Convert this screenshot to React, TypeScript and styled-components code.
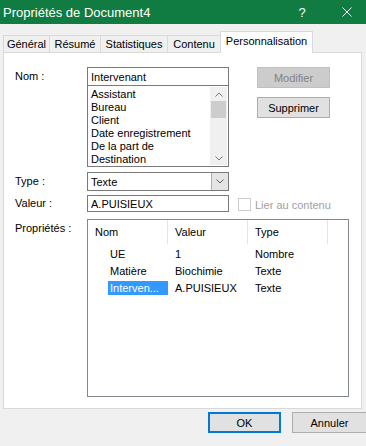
import React from "react";
import styled, { createGlobalStyle, css } from "styled-components";

const Global = createGlobalStyle`
  html, body { margin: 0; padding: 0; background: #f0f0f0; }
  body { font-family: "Liberation Sans", Arial, sans-serif; font-size: 11px; color: #000; }
  * { box-sizing: border-box; }
`;

const Window = styled.div`
  width: 366px;
  height: 446px;
  background: #f0f0f0;
  display: flex;
  flex-direction: column;
  overflow: hidden;
`;

const TitleBar = styled.div`
  height: 24px;
  background: #107c41;
  color: #fff;
  display: flex;
  align-items: center;
  padding-left: 3px;
  font-size: 13px;
`;

const TitleText = styled.span`
  flex: 1;
`;

const TitleBtn = styled.span<{ $w: number }>`
  width: ${(p) => p.$w}px;
  display: flex;
  justify-content: center;
  align-items: center;
  font-size: 13px;
`;

const TabStrip = styled.div`
  display: flex;
  align-items: flex-end;
  margin-top: 7px;
  padding-left: 3px;
  height: 21px;
`;

const Tab = styled.div<{ $active?: boolean; $w: number }>`
  width: ${(p) => p.$w}px;
  height: 17px;
  border: 1px solid #d9d9d9;
  border-bottom: none;
  border-left: none;
  background: #f0f0f0;
  display: flex;
  align-items: center;
  justify-content: center;
  font-size: 11px;
  &:first-child { border-left: 1px solid #d9d9d9; }
  ${(p) =>
    p.$active &&
    css`
      height: 22px;
      margin-bottom: -1px;
      background: #fff;
      border-left: 1px solid #d9d9d9;
      margin-left: -1px;
      position: relative;
      z-index: 1;
      align-items: flex-start;
      padding-top: 3px;
    `}
`;

const Panel = styled.div`
  margin: 0 4px 0 3px;
  height: 357px;
  background: #fff;
  border: 1px solid #d9d9d9;
  padding: 14px 11px 11px 11px;
  display: flex;
  flex-direction: column;
`;

const Row = styled.div<{ $mt?: number }>`
  display: flex;
  align-items: flex-start;
  margin-top: ${(p) => p.$mt ?? 0}px;
`;

const Label = styled.div<{ $pt?: number }>`
  width: 72px;
  padding-top: ${(p) => p.$pt ?? 3}px;
  font-size: 11px;
`;

const Combo = styled.div`
  width: 142px;
  display: flex;
  flex-direction: column;
`;

const TextBox = styled.div<{ $h?: number }>`
  height: ${(p) => p.$h ?? 19}px;
  border: 1px solid #7a7a7a;
  display: flex;
  align-items: center;
  padding-left: 3px;
  background: #fff;
`;

const ListBox = styled.div`
  height: 81px;
  border: 1px solid #7a7a7a;
  border-top: none;
  display: flex;
`;

const ListItems = styled.div`
  flex: 1;
  padding: 2px 0 0 3px;
  overflow: hidden;
  white-space: nowrap;
`;

const ListItem = styled.div`
  height: 13px;
  line-height: 13px;
`;

const ScrollBar = styled.div`
  width: 17px;
  background: #f0f0f0;
  display: flex;
  flex-direction: column;
  align-items: center;
  margin: 1px 1px 1px 0;
`;

const ScrollArrow = styled.div`
  height: 14px;
  width: 100%;
  display: flex;
  align-items: center;
  justify-content: center;
`;

const Thumb = styled.div`
  width: 15px;
  height: 17px;
  background: #cdcdcd;
`;

const ScrollTrack = styled.div`
  flex: 1;
`;

const ButtonCol = styled.div`
  margin-left: 28px;
  display: flex;
  flex-direction: column;
  gap: 9px;
`;

const Button = styled.div<{ $disabled?: boolean; $default?: boolean; $w?: number }>`
  width: ${(p) => p.$w ?? 73}px;
  height: 21px;
  border: 1px solid #adadad;
  background: #e1e1e1;
  display: flex;
  align-items: center;
  justify-content: center;
  font-size: 11px;
  ${(p) =>
    p.$disabled &&
    css`
      background: #cccccc;
      border-color: #bfbfbf;
      color: #838383;
    `}
  ${(p) =>
    p.$default &&
    css`
      border: 2px solid #0078d7;
    `}
`;

const Select = styled.div`
  width: 142px;
  height: 19px;
  border: 1px solid #7a7a7a;
  display: flex;
  align-items: center;
  padding-left: 3px;
`;

const SelectText = styled.span`
  flex: 1;
`;

const DropBtn = styled.div`
  width: 17px;
  height: 17px;
  background: #e5e5e5;
  border-left: 1px solid #adadad;
  display: flex;
  align-items: center;
  justify-content: center;
`;

const CheckWrap = styled.div`
  margin-left: 9px;
  margin-top: 3px;
  display: flex;
  align-items: center;
  gap: 4px;
  color: #a0a0a0;
`;

const CheckBox = styled.div`
  width: 13px;
  height: 13px;
  border: 1px solid #cccccc;
  background: #fff;
`;

const ListView = styled.div`
  width: 262px;
  height: 178px;
  border: 1px solid #828790;
  display: flex;
  flex-direction: column;
`;

const Header = styled.div`
  display: flex;
  height: 25px;
`;

const HeaderCell = styled.div<{ $w: number }>`
  width: ${(p) => p.$w}px;
  border-right: 1px solid #e5e5e5;
  padding-left: 7px;
  display: flex;
  align-items: center;
  height: 24px;
`;

const DataRow = styled.div`
  display: flex;
  height: 17px;
  align-items: center;
`;

const Cell = styled.div<{ $w: number; $indent?: number }>`
  width: ${(p) => p.$w}px;
  padding-left: ${(p) => p.$indent ?? 7}px;
  white-space: nowrap;
  overflow: hidden;
`;

const NameText = styled.span<{ $sel?: boolean }>`
  display: inline-block;
  height: 14px;
  line-height: 14px;
  padding: 0 2px;
  ${(p) =>
    p.$sel &&
    css`
      background: #3399ff;
      color: #fff;
      width: 60px;
    `}
`;

const Footer = styled.div`
  flex: 1;
  display: flex;
  justify-content: flex-end;
  align-items: flex-start;
  padding-top: 3px;
  gap: 11px;
  margin-right: -1px;
`;

const Chevron = ({ up, color = "#606060" }: { up?: boolean; color?: string }) => (
  <svg width="8" height="5" viewBox="0 0 8 5">
    <polyline
      points={up ? "0.5,4.5 4,1 7.5,4.5" : "0.5,0.5 4,4 7.5,0.5"}
      fill="none"
      stroke={color}
      strokeWidth="1"
    />
  </svg>
);

const names = ["Assistant", "Bureau", "Client", "Date enregistrement", "De la part de", "Destination"];
const props = [
  { n: "UE", v: "1", t: "Nombre" },
  { n: "Matière", v: "Biochimie", t: "Texte" },
  { n: "Interven...", v: "A.PUISIEUX", t: "Texte", sel: true },
];

export default function App() {
  return (
    <Window>
      <Global />
      <TitleBar>
        <TitleText>Propriétés de Document4</TitleText>
        <TitleBtn $w={52}>?</TitleBtn>
        <TitleBtn $w={38}>
          <svg width="10" height="10" viewBox="0 0 10 10">
            <path d="M0.5 0.5 L9.5 9.5 M9.5 0.5 L0.5 9.5" stroke="#fff" strokeWidth="1" />
          </svg>
        </TitleBtn>
      </TitleBar>
      <TabStrip>
        <Tab $w={47}>Général</Tab>
        <Tab $w={51}>Résumé</Tab>
        <Tab $w={67}>Statistiques</Tab>
        <Tab $w={53}>Contenu</Tab>
        <Tab $w={93} $active>Personnalisation</Tab>
      </TabStrip>
      <Panel>
        <Row>
          <Label>Nom :</Label>
          <Combo>
            <TextBox>Intervenant</TextBox>
            <ListBox>
              <ListItems>
                {names.map((n) => (
                  <ListItem key={n}>{n}</ListItem>
                ))}
              </ListItems>
              <ScrollBar>
                <ScrollArrow>
                  <Chevron up color="#777" />
                </ScrollArrow>
                <Thumb />
                <ScrollTrack />
                <ScrollArrow>
                  <Chevron color="#777" />
                </ScrollArrow>
              </ScrollBar>
            </ListBox>
          </Combo>
          <ButtonCol>
            <Button $disabled>Modifier</Button>
            <Button>Supprimer</Button>
          </ButtonCol>
        </Row>
        <Row $mt={5}>
          <Label>Type :</Label>
          <Select>
            <SelectText>Texte</SelectText>
            <DropBtn>
              <Chevron />
            </DropBtn>
          </Select>
        </Row>
        <Row $mt={4}>
          <Label $pt={2}>Valeur :</Label>
          <Combo>
            <TextBox $h={17}>A.PUISIEUX</TextBox>
          </Combo>
          <CheckWrap>
            <CheckBox />
            <span>Lier au contenu</span>
          </CheckWrap>
        </Row>
        <Row $mt={7}>
          <Label $pt={3}>Propriétés :</Label>
          <ListView>
            <Header>
              <HeaderCell $w={80}>Nom</HeaderCell>
              <HeaderCell $w={80}>Valeur</HeaderCell>
              <HeaderCell $w={80}>Type</HeaderCell>
            </Header>
            {props.map((p) => (
              <DataRow key={p.n}>
                <Cell $w={80} $indent={20}>
                  <NameText $sel={p.sel}>{p.n}</NameText>
                </Cell>
                <Cell $w={80}>{p.v}</Cell>
                <Cell $w={80}>{p.t}</Cell>
              </DataRow>
            ))}
          </ListView>
        </Row>
      </Panel>
      <Footer>
        <Button $default>OK</Button>
        <Button $w={75}>Annuler</Button>
      </Footer>
    </Window>
  );
}
